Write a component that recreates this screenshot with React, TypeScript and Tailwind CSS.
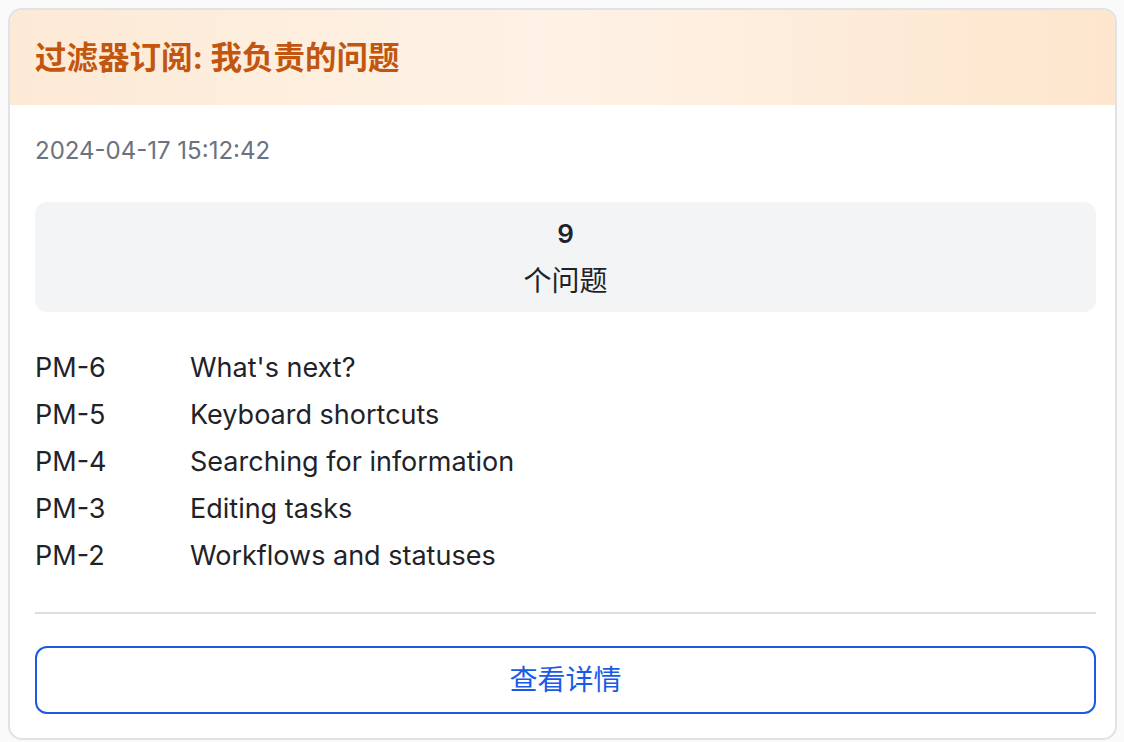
import React from "react";

const rows = [
  ["PM-6", "What's next?"],
  ["PM-5", "Keyboard shortcuts"],
  ["PM-4", "Searching for information"],
  ["PM-3", "Editing tasks"],
  ["PM-2", "Workflows and statuses"],
];

export default function App() {
  return (
    <div
      className="min-h-[742px] w-[1124px] bg-[#fafafb] pl-[8px] pr-[7px] pt-[8px]"
      style={{ fontFamily: 'Inter, "Noto Sans CJK SC", sans-serif' }}
    >
      <div className="overflow-hidden rounded-[14px] border-2 border-[#e1e2e7] bg-white">
        <div className="flex h-[95px] items-center bg-gradient-to-r from-[#fdead6] via-[#fef2e6] to-[#fde6cd] pl-[25px]">
          <h1 className="text-[31.5px] font-bold leading-none text-[#c2560e]">
            过滤器订阅: 我负责的问题
          </h1>
        </div>
        <div className="pl-[25px] pr-[19px] pb-[24px] pt-[31px]">
          <div className="text-[24px] leading-[30px] text-[#6b7280]">2024-04-17 15:12:42</div>
          <div className="mt-[36px] flex h-[110px] flex-col items-center rounded-[12px] bg-[#f3f4f6] pt-[14px] text-[#1f2329]">
            <div className="text-[26px] font-semibold leading-[36px]">9</div>
            <div className="mt-[9px] text-[28px] leading-[40px]">个问题</div>
          </div>
          <div className="mt-[33px] flex flex-col text-[27px] text-[#1f2329]">
            {rows.map(([id, title]) => (
              <div key={id} className="flex h-[47px] items-center">
                <span className="w-[155px] shrink-0">{id}</span>
                <span>{title}</span>
              </div>
            ))}
          </div>
          <div className="mt-[32px] h-[2px] bg-[#dedede]" />
          <button className="mt-[32px] flex h-[68px] w-full items-center justify-center rounded-[12px] border-2 border-[#1a5be6] text-[28px] text-[#1a5be6]">
            查看详情
          </button>
        </div>
      </div>
    </div>
  );
}
